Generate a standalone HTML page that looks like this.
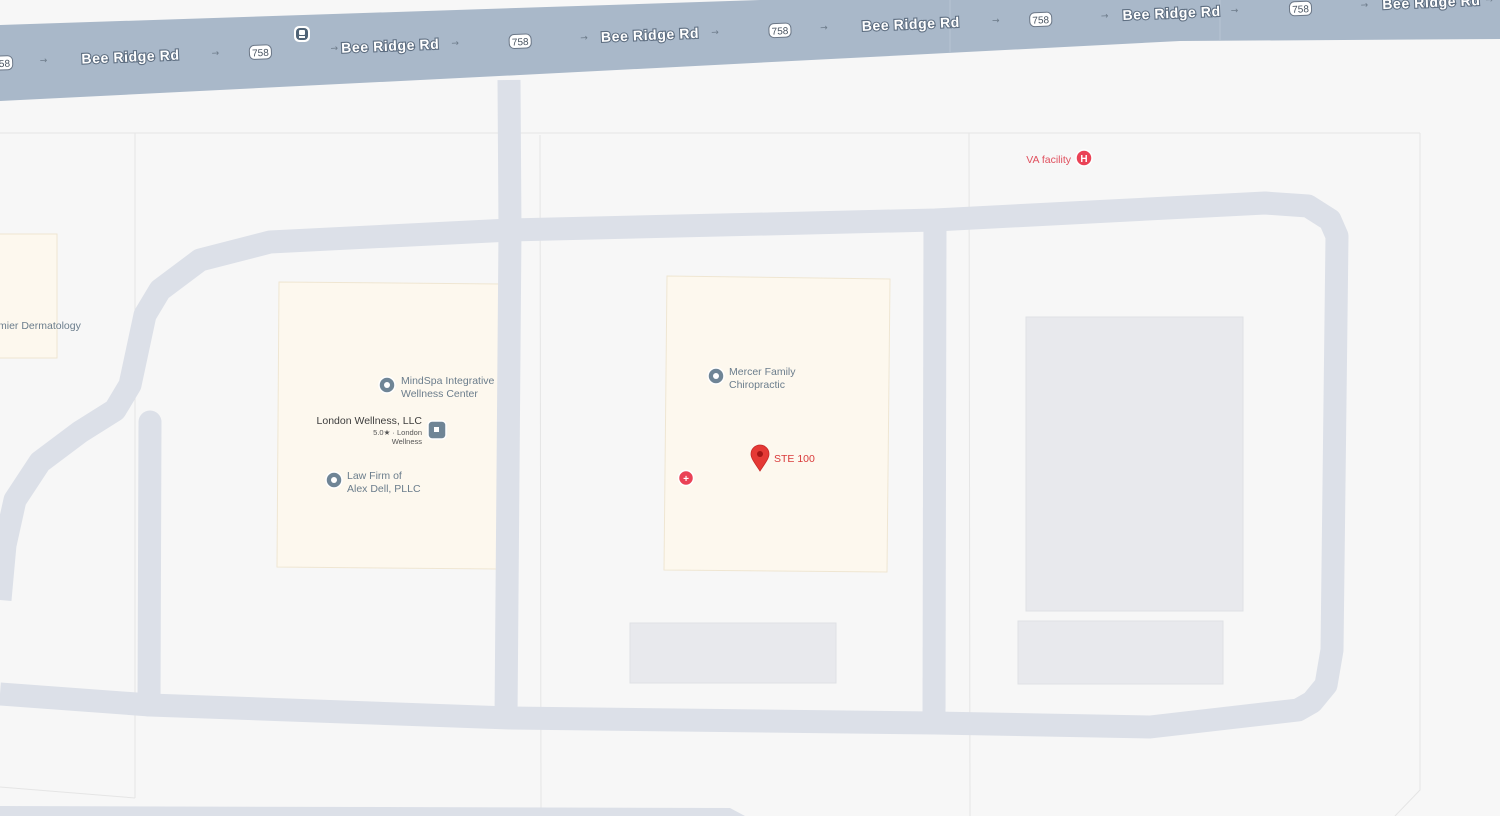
<!DOCTYPE html>
<html><head><meta charset="utf-8"><style>
html,body{margin:0;padding:0;background:#f7f7f7;overflow:hidden}
svg{display:block}
.rl{font-family:"Liberation Sans",sans-serif;font-size:14px;font-weight:bold;fill:#fff;stroke:#5f6f82;stroke-width:2.2px;paint-order:stroke;letter-spacing:0.6px}
.sh{font-family:"Liberation Sans",sans-serif;font-size:10px;fill:#4a5562}
.lb{font-family:"Liberation Sans",sans-serif;font-size:10.5px;fill:#6b7d8c}
.ar{font-family:"DejaVu Sans",sans-serif;font-size:9px;fill:#6d7b8a}
</style></head><body>
<svg width="1500" height="816" viewBox="0 0 1500 816" xmlns="http://www.w3.org/2000/svg">
<rect width="1500" height="816" fill="#f7f7f7"/>
<g stroke="#e5e5e5" stroke-width="1" fill="none">
<line x1="135" y1="133" x2="135" y2="798"/>
<line x1="540" y1="135" x2="541" y2="816"/>
<line x1="969" y1="133" x2="970" y2="816"/>
<line x1="0" y1="133" x2="1420" y2="133"/>
<polyline points="1420,133 1420,790 1395,816"/>
<polyline points="0,787 135,798"/>
</g>
<g stroke="#efe6d2" stroke-width="1">
<rect x="-2" y="234" width="59" height="124" fill="#fdf8ee"/>
<polygon points="279,282 500,284 498,569 277,567" fill="#fdf8ee"/>
<polygon points="667,276 890,279 887,572 664,570" fill="#fdf8ee"/>
</g>
<g fill="#e8e9ed" stroke="#dfe1e5" stroke-width="1">
<rect x="1026" y="317" width="217" height="294"/>
<rect x="630" y="623" width="206" height="60"/>
<rect x="1018" y="621" width="205" height="63"/>
</g>
<g stroke="#dce0e8" stroke-width="23" fill="none" stroke-linejoin="round">
<path d="M0,600 L5,545 L15,500 L40,462 L80,432 L115,410 L130,385 L145,315 L160,290 L200,260 L270,242 L510,230 L935,220 L1265,203 L1308,206 L1330,220 L1337,236 L1332,650 L1326,685 L1312,702 L1298,710 L1150,727 L935,723 L510,718 L150,705 L0,694"/>
<path d="M509,80 L510,230 L506,718"/>
<path d="M935,220 L934,718"/>
<path d="M150,422 L149,705" stroke-linecap="round"/>
</g>
<polygon points="0,806 730,808 745,816 0,816" fill="#dce0e8"/>
<polygon points="0,25 760,0 1500,0 1500,39 1180,41 520,75 0,101" fill="#a9b8c9"/>
<line x1="950" y1="0" x2="950" y2="52" stroke="#b6c3d2" stroke-width="1"/>
<line x1="1220" y1="0" x2="1220" y2="40" stroke="#b6c3d2" stroke-width="1"/>
<g transform="rotate(-2.4)">
<g class="rl" text-anchor="middle">
<text x="128" y="67">Bee Ridge Rd</text>
<text x="388" y="67">Bee Ridge Rd</text>
<text x="648" y="67">Bee Ridge Rd</text>
<text x="909" y="67">Bee Ridge Rd</text>
<text x="1170" y="67">Bee Ridge Rd</text>
<text x="1430" y="67">Bee Ridge Rd</text>
</g>
<g>
<rect x="-12" y="56" width="22" height="14" rx="5" fill="#fff" stroke="#6b7787"/>
<rect x="247" y="56" width="22" height="14" rx="5" fill="#fff" stroke="#6b7787"/>
<rect x="507" y="56" width="22" height="14" rx="5" fill="#fff" stroke="#6b7787"/>
<rect x="767" y="56" width="22" height="14" rx="5" fill="#fff" stroke="#6b7787"/>
<rect x="1028" y="56" width="22" height="14" rx="5" fill="#fff" stroke="#6b7787"/>
<rect x="1288" y="56" width="22" height="14" rx="5" fill="#fff" stroke="#6b7787"/>
</g>
<g class="sh" text-anchor="middle">
<text x="-1" y="67">758</text><text x="258" y="67">758</text><text x="518" y="67">758</text>
<text x="778" y="67">758</text><text x="1039" y="67">758</text><text x="1299" y="67">758</text>
</g>
<g class="ar" text-anchor="middle">
<text x="41" y="65">→</text><text x="213" y="65">→</text><text x="332" y="65">→</text><text x="453" y="65">→</text>
<text x="582" y="65">→</text><text x="713" y="65">→</text><text x="822" y="65">→</text><text x="994" y="65">→</text>
<text x="1103" y="65">→</text><text x="1233" y="65">→</text><text x="1363" y="65">→</text><text x="1488" y="65">→</text>
</g>
</g>
<rect x="294" y="26" width="16" height="16" rx="5" fill="#fff"/>
<rect x="296" y="28" width="12" height="12" rx="4" fill="#4f6376"/>
<rect x="299" y="30" width="6" height="5" rx="1" fill="#fff"/>
<rect x="299" y="36" width="6" height="2" fill="#fff"/>
<g>
<circle cx="387" cy="385" r="8" fill="#6f8596" stroke="#fff" stroke-width="1.5"/><circle cx="387" cy="385" r="3" fill="#fff"/>
<circle cx="334" cy="480" r="8" fill="#6f8596" stroke="#fff" stroke-width="1.5"/><circle cx="334" cy="480" r="3" fill="#fff"/>
<circle cx="716" cy="376" r="8" fill="#6f8596" stroke="#fff" stroke-width="1.5"/><circle cx="716" cy="376" r="3" fill="#fff"/>
<rect x="428" y="421" width="18" height="18" rx="4" fill="#6f8596" stroke="#fff" stroke-width="1.5"/><rect x="434" y="427" width="5" height="5" fill="#fff"/>
<circle cx="686" cy="478" r="7.5" fill="#ea4256" stroke="#fff" stroke-width="1.5"/><text x="686" y="482" text-anchor="middle" font-family="Liberation Sans" font-size="10" font-weight="bold" fill="#fff">+</text>
<circle cx="1084" cy="158" r="8" fill="#ea4256" stroke="#fff" stroke-width="1.5"/><text x="1084" y="162" text-anchor="middle" font-family="Liberation Sans" font-size="10" font-weight="bold" fill="#fff">H</text>
<path d="M760,471 C754,462 751,458 751,454 A9,9 0 0 1 769,454 C769,458 766,462 760,471Z" fill="#e53935" stroke="#c62828" stroke-width="0.8"/>
<circle cx="760" cy="454" r="3" fill="#a31515"/>
</g>
<g class="lb">
<text x="401" y="384">MindSpa Integrative</text><text x="401" y="397">Wellness Center</text>
<text x="347" y="479">Law Firm of</text><text x="347" y="492">Alex Dell, PLLC</text>
<text x="729" y="375">Mercer Family</text><text x="729" y="388">Chiropractic</text>
<text x="-2" y="329">mier Dermatology</text>
</g>
<text x="422" y="424" text-anchor="end" font-family="Liberation Sans" font-size="10.5" fill="#3d3d3d">London Wellness, LLC</text>
<text x="422" y="435" text-anchor="end" font-family="Liberation Sans" font-size="7.5" fill="#555">5.0★ · London</text>
<text x="422" y="444" text-anchor="end" font-family="Liberation Sans" font-size="7.5" fill="#555">Wellness</text>
<text x="774" y="462" font-family="Liberation Sans" font-size="10.5" fill="#d93a3a">STE 100</text>
<text x="1071" y="163" text-anchor="end" font-family="Liberation Sans" font-size="10.5" fill="#e0505e">VA facility</text>
</svg>
</body></html>
